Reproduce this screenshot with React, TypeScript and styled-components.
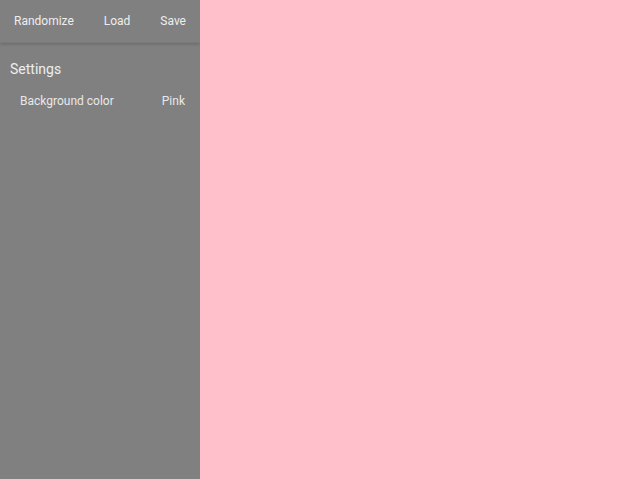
import React from "react";
import styled, { createGlobalStyle } from "styled-components";

const Global = createGlobalStyle`
  html, body { margin: 0; padding: 0; height: 100%; }
  body { font-family: Roboto, "Liberation Sans", sans-serif; }
  #root { height: 100%; }
`;

const Layout = styled.div`
  display: flex;
  width: 640px;
  height: 479px;
  overflow: hidden;
`;

const Sidebar = styled.aside`
  width: 200px;
  flex: none;
  background: #808080;
  display: flex;
  flex-direction: column;
`;

const Toolbar = styled.div`
  height: 42px;
  display: flex;
  align-items: center;
  justify-content: space-between;
  padding: 0 14px 0 14px;
  box-shadow: 0 2px 2px rgba(0, 0, 0, 0.12);
  border-bottom: 1px solid #7a7a7a;
`;

const ToolButton = styled.button`
  background: none;
  border: none;
  padding: 0;
  margin: 0;
  font-family: Roboto, "Liberation Sans", sans-serif;
  font-size: 12px;
  color: #eeeeee;
  cursor: pointer;
`;

const Section = styled.div`
  padding: 16px 10px 0 10px;
`;

const SectionTitle = styled.div`
  font-size: 14px;
  color: #eeeeee;
  line-height: 20px;
`;

const Row = styled.div`
  display: flex;
  justify-content: space-between;
  align-items: center;
  padding: 14px 5px 0 10px;
  font-size: 12px;
  color: #e8e8e8;
  line-height: 16px;
`;

const Canvas = styled.main`
  flex: 1;
  background: #ffc0cb;
`;

export default function App() {
  return (
    <>
      <Global />
      <Layout>
        <Sidebar>
          <Toolbar>
            <ToolButton>Randomize</ToolButton>
            <ToolButton>Load</ToolButton>
            <ToolButton>Save</ToolButton>
          </Toolbar>
          <Section>
            <SectionTitle>Settings</SectionTitle>
            <Row>
              <span>Background color</span>
              <span>Pink</span>
            </Row>
          </Section>
        </Sidebar>
        <Canvas />
      </Layout>
    </>
  );
}
